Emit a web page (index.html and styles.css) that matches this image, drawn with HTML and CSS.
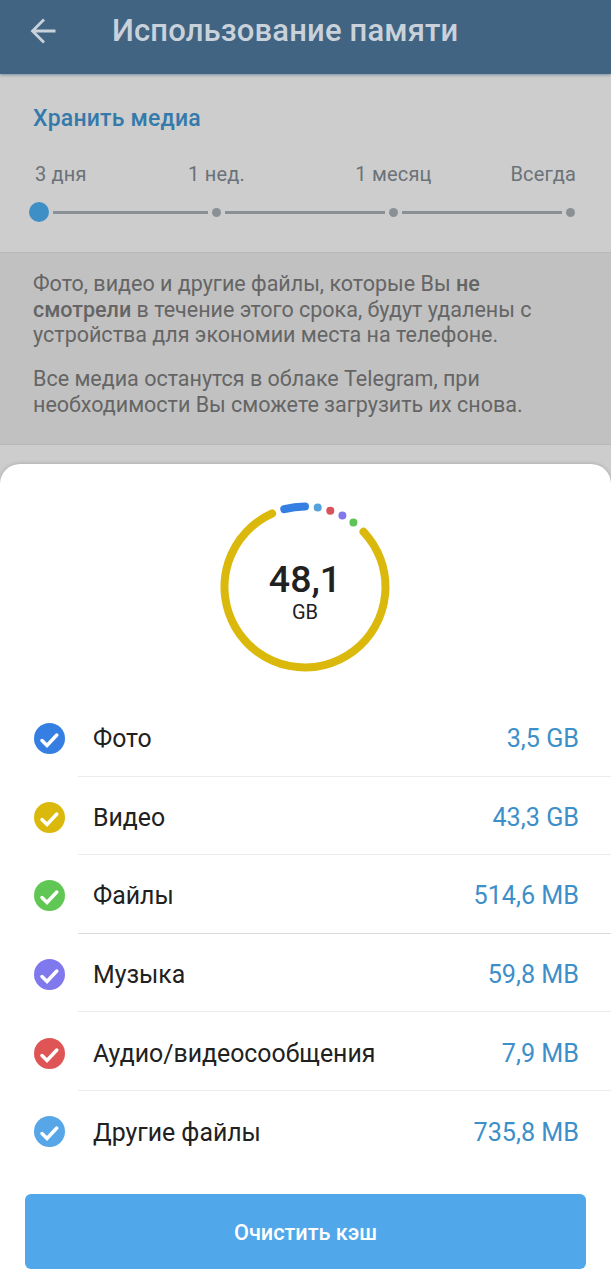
FILE: index.html
```html
<!DOCTYPE html>
<html lang="ru">
<head>
    <meta charset="UTF-8">
    <title>Использование памяти</title>
    <link rel="stylesheet" href="styles.css">
</head>
<body>
    <header class="toolbar">
        <svg class="back-icon" width="26" height="26" viewBox="0 0 26 26">
            <path d="M25.500 13H2.500M14 1.500L2.500 13l11.500 11.500" fill="none" stroke="#c9d2da" stroke-width="2.800"/>
        </svg>
        <h1>Использование памяти</h1>
    </header>

    <section class="keep-media">
        <h2>Хранить медиа</h2>
        <div class="labels">
            <span>3 дня</span>
            <span>1 нед.</span>
            <span>1 месяц</span>
            <span>Всегда</span>
        </div>
        <div class="slider">
            <i class="dot selected"></i>
            <i class="line"></i>
            <i class="dot"></i>
            <i class="line"></i>
            <i class="dot"></i>
            <i class="line"></i>
            <i class="dot"></i>
        </div>
    </section>

    <section class="note">
        <p>Фото, видео и другие файлы, которые Вы <b>не<br>смотрели</b> в течение этого срока, будут удалены с<br>устройства для экономии места на телефоне.</p>
        <p>Все медиа останутся в облаке Telegram, при<br>необходимости Вы сможете загрузить их снова.</p>
    </section>

    <main class="sheet">
        <div class="chart">
            <svg width="170" height="170" viewBox="0 0 170 170" fill="none" stroke-width="8" stroke-linecap="round">
                <path d="M143.500 29.700A80.500 80.500 0 1 1 52.100 11.500" stroke="#dbb90c"/>
                <path d="M64.300 7.200A80.500 80.500 0 0 1 85 4.500" stroke="#357fe2"/>
                <circle cx="97.700" cy="5.500" r="4" fill="#56a2dc"/>
                <circle cx="110.300" cy="8.700" r="4" fill="#d9525b"/>
                <circle cx="122.400" cy="13.500" r="4" fill="#8378ea"/>
                <circle cx="133.400" cy="20.500" r="4" fill="#5fc356"/>
            </svg>
            <div class="total">
                <strong>48,1</strong>
                <span>GB</span>
            </div>
        </div>

        <ul class="list">
            <li>
                <svg class="check photo" viewBox="0 0 31 31"><path d="M8 17.500l5 5L22.800 12"/></svg>
                <div class="row"><span>Фото</span><span class="size">3,5 GB</span></div>
            </li>
            <li>
                <svg class="check video" viewBox="0 0 31 31"><path d="M8 17.500l5 5L22.800 12"/></svg>
                <div class="row"><span>Видео</span><span class="size">43,3 GB</span></div>
            </li>
            <li>
                <svg class="check files" viewBox="0 0 31 31"><path d="M8 17.500l5 5L22.800 12"/></svg>
                <div class="row dark"><span>Файлы</span><span class="size">514,6 MB</span></div>
            </li>
            <li>
                <svg class="check music" viewBox="0 0 31 31"><path d="M8 17.500l5 5L22.800 12"/></svg>
                <div class="row"><span>Музыка</span><span class="size">59,8 MB</span></div>
            </li>
            <li>
                <svg class="check audio" viewBox="0 0 31 31"><path d="M8 17.500l5 5L22.800 12"/></svg>
                <div class="row"><span>Аудио/видеосообщения</span><span class="size">7,9 MB</span></div>
            </li>
            <li>
                <svg class="check other" viewBox="0 0 31 31"><path d="M8 17.500l5 5L22.800 12"/></svg>
                <div class="row"><span>Другие файлы</span><span class="size">735,8 MB</span></div>
            </li>
        </ul>

        <button class="clear-btn">Очистить кэш</button>
    </main>
</body>
</html>
```
FILE: styles.css
```css
* {
    box-sizing: border-box;
}

body {
    margin: 0;
    background-color: #cdcdcd;
    font-family: Roboto, sans-serif;
    color: #212121;
}

h1, h2, p, ul {
    margin: 0;
    padding: 0;
}

.toolbar {
    display: flex;
    align-items: center;
    height: 74px;
    padding: 0 30px 13px;
    background-color: #416482;
    box-shadow: 0 1px 3px rgba(65, 100, 130, 0.6);
}

.toolbar h1 {
    margin-left: 56px;
    font-size: 31px;
    font-weight: 500;
    letter-spacing: 0.150px;
    color: #c9d2da;
}

.keep-media {
    height: 178px;
    padding: 31px 35px 0 33px;
}

.keep-media h2 {
    font-size: 23px;
    font-weight: 500;
    line-height: 28px;
    letter-spacing: 0.2px;
    color: #347aaa;
}

.labels {
    display: grid;
    grid-template-columns: 93px 177px 177px 94px;
    margin: 28px 0 0 2px;
    font-size: 20px;
    line-height: 26px;
    letter-spacing: 0.2px;
    color: #6b7278;
    text-align: center;
}

.labels span:first-child {
    text-align: left;
}

.labels span:last-child {
    text-align: right;
}

.slider {
    display: flex;
    align-items: center;
    height: 20px;
    margin: 15px 1px 0 -4px;
}

.dot {
    width: 9px;
    height: 9px;
    border-radius: 50%;
    background-color: #8a9196;
}

.dot.selected {
    width: 20px;
    height: 20px;
    background-color: #3e8fc6;
}

.line {
    flex: 1;
    height: 3px;
    margin: 0 4px;
    background-color: #8a9196;
}

.selected + .line {
    flex: 0 0 155px;
}

.note {
    height: 193px;
    padding: 18px 33px 0;
    border-top: 1px solid #b8b8b8;
    border-bottom: 1px solid #b8b8b8;
    background-color: #c1c1c1;
    font-size: 21.500px;
    line-height: 25.500px;
    color: #656565;
    white-space: nowrap;
}

.note p + p {
    margin-top: 18.500px;
}

.note b {
    font-weight: 500;
}

.sheet {
    height: 816px;
    margin-top: 19px;
    padding-top: 38px;
    border-radius: 20px 20px 0 0;
    background-color: #fff;
    box-shadow: 0 0 4px rgba(0, 0, 0, 0.2);
}

.chart {
    display: grid;
    width: 170px;
    height: 170px;
    margin: 0 0 0 220px;
}

.chart > * {
    grid-area: 1 / 1;
}

.total {
    padding-top: 55px;
    text-align: center;
}

.total strong {
    display: block;
    font-size: 37.500px;
    font-weight: 500;
    line-height: 44px;
}

.total span {
    display: block;
    font-size: 20px;
    line-height: 23px;
}

.list {
    margin-top: 26px;
    list-style: none;
}

.list li {
    display: flex;
    align-items: center;
    height: 78.600px;
    padding-left: 34px;
}

.check {
    width: 31px;
    height: 31px;
    margin-top: 3px;
    border-radius: 50%;
}

.check path {
    fill: none;
    stroke: #fff;
    stroke-width: 3.500;
    stroke-linecap: round;
}

.photo { background-color: #357fe2; }
.video { background-color: #dbb90c; }
.files { background-color: #61c754; }
.music { background-color: #8079ee; }
.audio { background-color: #df5555; }
.other { background-color: #56a6e8; }

.row {
    display: flex;
    flex: 1;
    align-items: center;
    justify-content: space-between;
    height: 100%;
    margin-left: 13px;
    padding: 4px 32px 0 15px;
    border-bottom: 1px solid #ececec;
    font-size: 24.850px;
}

.row.dark {
    border-color: #dadada;
}

.list li:last-child .row {
    border: none;
}

.size {
    font-size: 25.200px;
    color: #3d8fc9;
}

.clear-btn {
    display: block;
    width: 561px;
    height: 75px;
    margin: 24px auto 0 25px;
    padding-top: 3px;
    border: none;
    border-radius: 6px;
    background-color: #50a7ea;
    color: #fff;
    font-family: inherit;
    font-size: 21.700px;
    font-weight: 500;
}
```
